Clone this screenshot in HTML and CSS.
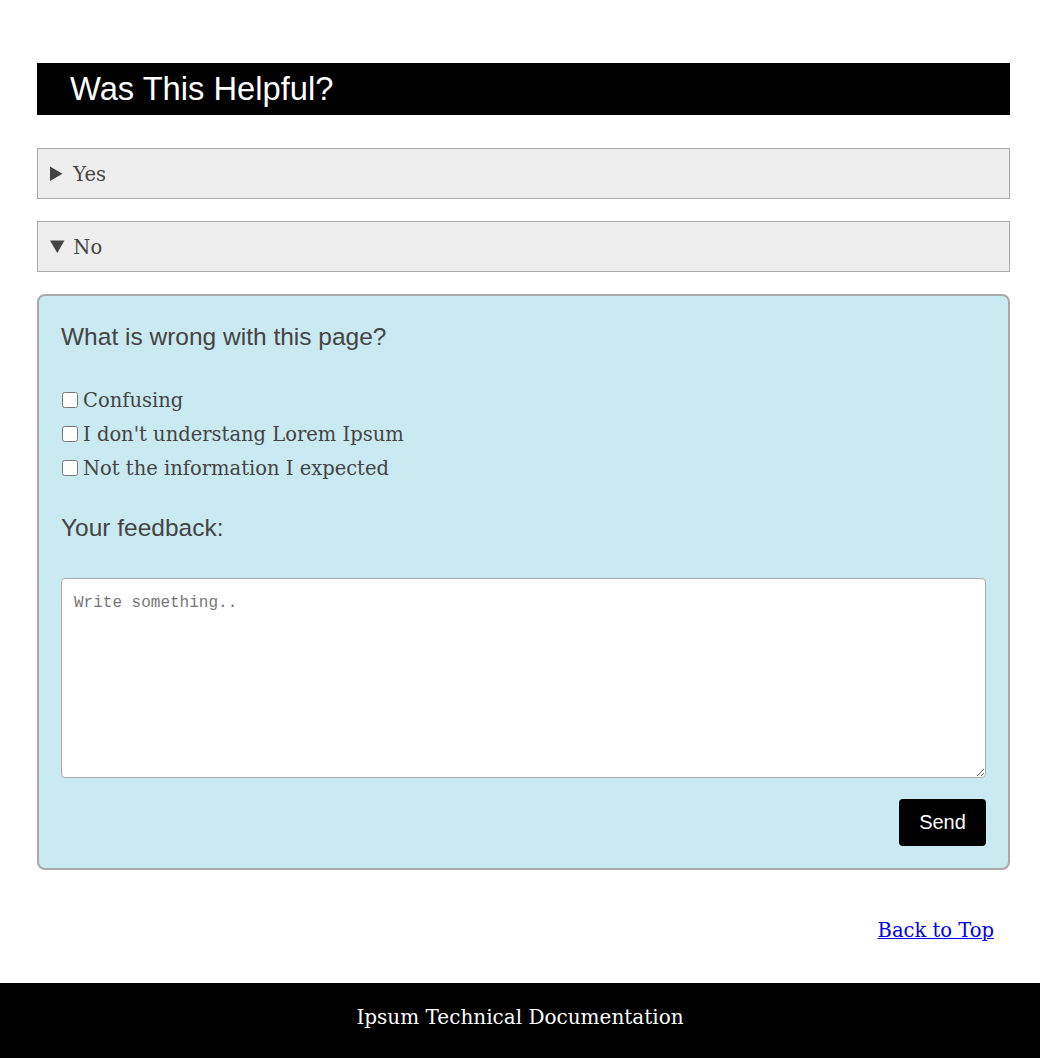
FILE: index.html
```html
<!DOCTYPE html>
<html lang="en">
<head>
<meta charset="utf-8">
<title>Was This Helpful?</title>
<link rel="stylesheet" href="styles.css">
</head>
<body>
<main class="page">
  <section class="feedback">
    <h2 class="feedback-title">Was This Helpful?</h2>
    <details class="choice">
      <summary class="choice-summary">Yes</summary>
    </details>
    <details class="choice" open>
      <summary class="choice-summary">No</summary>
      <form class="panel">
        <h3 class="panel-heading">What is wrong with this page?</h3>
        <div class="options">
          <label class="option"><input type="checkbox" class="option-box">Confusing</label>
          <label class="option"><input type="checkbox" class="option-box">I don't understang Lorem Ipsum</label>
          <label class="option"><input type="checkbox" class="option-box">Not the information I expected</label>
        </div>
        <h3 class="panel-heading panel-heading-feedback">Your feedback:</h3>
        <textarea class="comment" placeholder="Write something.."></textarea>
        <div class="actions">
          <button type="button" class="send">Send</button>
        </div>
      </form>
    </details>
  </section>
  <div class="back">
    <a href="#" class="back-link">Back to Top</a>
  </div>
</main>
<footer class="footer">Ipsum Technical Documentation</footer>
</body>
</html>
```

FILE: styles.css
```css
html, body {
  margin: 0;
  padding: 0;
  background: #ffffff;
}

body {
  font-family: "DejaVu Serif", "Liberation Serif", serif;
  color: #444444;
}

.page {
  padding: 63px 30px 0 37px;
}

.feedback-title {
  margin: 0 0 33px;
  height: 52px;
  line-height: 52px;
  padding-left: 33px;
  background: #000000;
  color: #ffffff;
  font-family: "Liberation Sans", Arial, sans-serif;
  font-weight: normal;
  font-size: 32.7px;
}

.choice {
  margin-bottom: 22px;
}

.choice-summary {
  box-sizing: border-box;
  height: 51px;
  overflow: hidden;
  background: #eeeeee;
  border: 1px solid #aaaaaa;
  padding: 12px 12px;
  line-height: 25px;
  font-size: 19.5px;
  color: #444444;
  cursor: pointer;
}

.choice-summary::marker {
  font-size: 22px;
}

.panel {
  margin-top: 22px;
  background: #c9eaf1;
  border: 2px solid #a9a9a9;
  border-radius: 8px;
  padding: 23px 22px 22px 22px;
}

.panel-heading {
  margin: 0;
  font-family: "Liberation Sans", Arial, sans-serif;
  font-weight: normal;
  font-size: 24.5px;
  line-height: 36px;
  color: #444444;
}

.options {
  display: flex;
  flex-direction: column;
  margin-top: 28px;
}

.option {
  display: flex;
  align-items: center;
  height: 34px;
  font-size: 19.5px;
  color: #444444;
}

.option-box {
  width: 16px;
  height: 16px;
  margin: 0 5px 0 1px;
}

.panel-heading-feedback {
  margin-top: 25px;
}

.comment {
  display: block;
  box-sizing: border-box;
  width: 100%;
  height: 200px;
  margin-top: 32px;
  padding: 15px 12px 12px;
  border: 1px solid #aaaaaa;
  border-radius: 4px;
  background: #ffffff;
  font-family: "Liberation Mono", "DejaVu Sans Mono", monospace;
  font-size: 16px;
}

.comment::placeholder {
  color: #777777;
}

.actions {
  display: flex;
  justify-content: flex-end;
  margin-top: 21px;
}

.send {
  width: 87px;
  height: 47px;
  background: #000000;
  color: #ffffff;
  border: none;
  border-radius: 4px;
  font-family: "Liberation Sans", Arial, sans-serif;
  font-size: 20px;
}

.back {
  display: flex;
  justify-content: flex-end;
  align-items: flex-start;
  padding: 25px 16px 0 0;
  height: 66px;
}

.back-link {
  color: #0000ee;
  font-size: 19.5px;
  line-height: 28px;
}

.footer {
  height: 75px;
  line-height: 68px;
  background: #000000;
  color: #ffffff;
  text-align: center;
  font-size: 20px;
}
```
